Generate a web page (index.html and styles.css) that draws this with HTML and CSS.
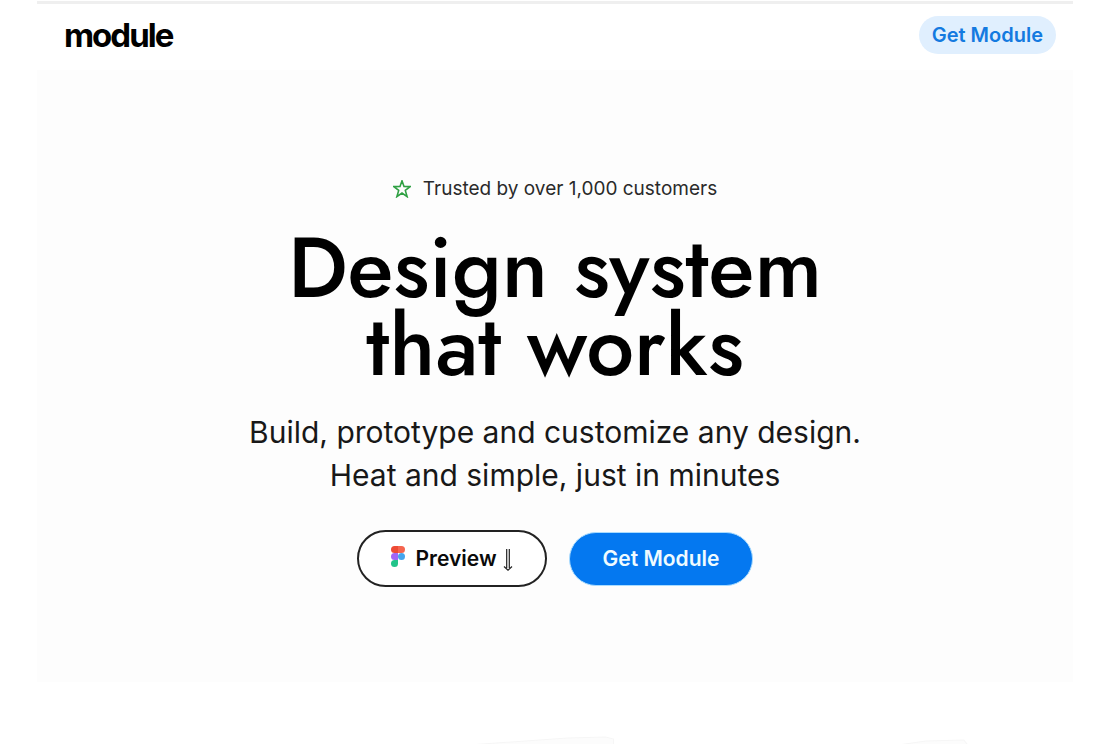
FILE: index.html
```
<!DOCTYPE html>
<html lang="en">
<head>
<meta charset="utf-8">
<meta name="viewport" content="width=device-width, initial-scale=1">
<title>Module</title>
<link rel="stylesheet" href="styles.css">
</head>
<body>
<div class="page">
  <header class="header">
    <a class="logo" href="#">module</a>
    <button class="button button-soft" type="button">Get Module</button>
  </header>
  <main class="hero">
    <p class="trust">
      <svg class="star" viewBox="1 1 18 18" aria-hidden="true"><path d="M10 1.8 12 7.5 18.2 7.6 13.3 11.4 15.1 17.6 10 14 4.9 17.6 6.7 11.4 1.8 7.6 8 7.5Z" fill="none" stroke="#2fa043" stroke-width="1.6"/></svg>
      <span>Trusted by over 1,000 customers</span>
    </p>
    <h1 class="title">Design system<br>that works</h1>
    <p class="subtitle">Build, prototype and customize any design.<br>Heat and simple, just in minutes</p>
    <div class="actions">
      <button class="button button-outline" type="button">
        <svg class="figma" viewBox="0 0 14 21" aria-hidden="true">
          <path d="M3.5 0H7V7H3.5a3.5 3.5 0 0 1 0-7Z" fill="#ee4b35"/>
          <path d="M7 0h3.500a3.500 3.500 0 0 1 0 7H7Z" fill="#f5654f"/>
          <path d="M3.500 7H7v7H3.500a3.500 3.500 0 0 1 0-7Z" fill="#a266f5"/>
          <circle cx="10.500" cy="10.500" r="3.500" fill="#45a5ee"/>
          <path d="M3.500 14H7v3.500A3.500 3.500 0 1 1 3.500 14Z" fill="#22c48a"/>
        </svg>
        <span>Preview</span>
        <svg class="arrow" viewBox="0 0 10 24" aria-hidden="true"><path d="M3.700 2V21M6.300 2V21M1 19.500 5 23.200 9 19.500" fill="none" stroke="#222" stroke-width="1.200"/></svg>
      </button>
      <button class="button button-primary" type="button">Get Module</button>
    </div>
  </main>
  <section class="showcase">
    <svg class="cards" viewBox="0 0 1035 62" aria-hidden="true"><path d="M430 63 530 56 568 55 576 57 576 63ZM860 63 888 59 926 58 930 63Z" fill="#fcfcfc" stroke="#f6f6f6"/></svg>
  </section>
</div>
</body>
</html>
```
FILE: styles.css
```
* { box-sizing: border-box; }
body {
  margin: 0;
  background: #fff;
  color: #000;
  font-family: Inter, "Liberation Sans", sans-serif;
}
.page { margin: 0 37px; padding-top: 1px; }
.header {
  display: flex;
  align-items: center;
  justify-content: space-between;
  height: 69px;
  padding: 0 17px 4px 27px;
  border-top: 3px solid #efefef;
}
.logo {
  color: #000;
  font-size: 33px;
  font-weight: 700;
  letter-spacing: -2px;
  text-decoration: none;
}
.button {
  display: inline-flex;
  align-items: center;
  justify-content: center;
  border: 0;
  border-radius: 32px;
  font-family: inherit;
  font-size: 21px;
  font-weight: 600;
  white-space: nowrap;
}
.button-soft {
  height: 38px;
  padding: 0 13px;
  background: #e0effe;
  color: #147ae0;
  font-size: 20px;
}
.hero {
  display: flex;
  flex-direction: column;
  align-items: center;
  padding: 106px 24px 95px;
  background: #fdfdfd;
  text-align: center;
}
.trust {
  display: flex;
  align-items: center;
  gap: 12px;
  margin: 0;
  color: #2a2a2a;
  font-size: 19px;
  line-height: 26px;
}
.star { width: 18px; height: 18px; }
.title {
  margin: 27px 0 0;
  font-family: Jost, Lato, sans-serif;
  font-size: 85px;
  font-weight: 500;
  line-height: 78px;
}
.subtitle {
  margin: 26px 0 0;
  color: #181818;
  font-size: 30px;
  line-height: 43px;
}
.actions {
  display: flex;
  align-items: center;
  gap: 22px;
  margin-top: 33px;
}
.button-outline {
  height: 57px;
  padding: 0 32px;
  border: 2px solid #222;
  background: #fff;
  color: #0a0a0a;
}
.button-primary {
  height: 54px;
  padding: 0 33px;
  border: 1px solid #a9dcff;
  background: #0478f0;
  color: #effbff;
}
.figma { width: 14px; height: 21px; margin: 0 11px 4px 0; }
.arrow { width: 10px; height: 24px; margin-left: 6px; }
.cards { display: block; width: 100%; }
```
